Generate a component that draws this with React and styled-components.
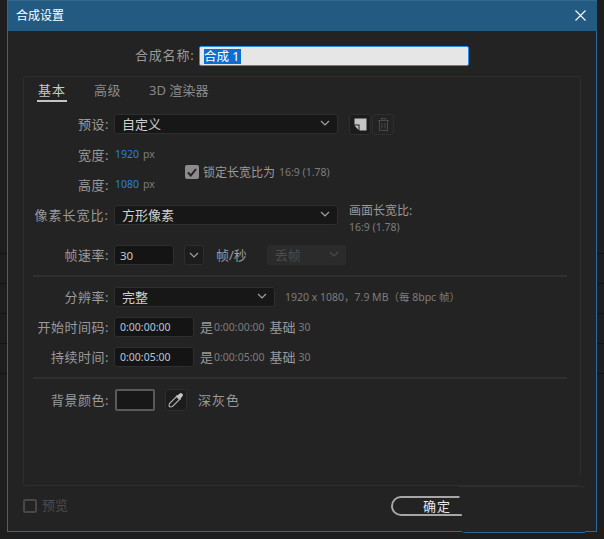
import styled, { createGlobalStyle } from "styled-components";

const GlobalStyle = createGlobalStyle`
  html, body { margin: 0; padding: 0; background: #1e1e1e; }
  * { box-sizing: border-box; }
`;

const Backdrop = styled.div`
  position: relative;
  width: 604px;
  height: 539px;
  overflow: hidden;
  padding-left: 7px;
  background: repeating-linear-gradient(to bottom, #131313 0 1px, #1e1e1e 1px 30px) 0 253px / 100% 121px no-repeat, #1e1e1e;
  font-family: "Noto Sans", "Noto Sans CJK SC", sans-serif;
  font-size: 13px;
  color: #9a9a9a;
`;

const Dialog = styled.div`
  width: 590px;
  height: 532px;
  display: flex;
  flex-direction: column;
  background: #232323;
  border: 1px solid #2a6a9a;
  border-top: 0;
`;

const TitleBar = styled.div`
  height: 31px;
  flex: none;
  display: flex;
  align-items: center;
  justify-content: space-between;
  padding: 0 11px 2px 8px;
  margin: 0 -1px 0 0;
  background: #235a82;
  border-top: 1px solid #34688c;
  color: #fff;
  font-size: 12px;
`;

const NameRow = styled.div`
  display: flex;
  align-items: center;
  height: 20px;
  margin-top: 15px;
  padding-left: 127px;
`;

const NameLabel = styled.span`
  letter-spacing: 0.8px;
  width: 64px;
  padding-bottom: 3px;
  white-space: nowrap;
`;

const NameInput = styled.div`
  width: 270px;
  height: 20px;
  display: flex;
  align-items: center;
  padding-left: 4px;
  background: #e6e6e6;
  border: 1px solid #2d8ceb;
  border-radius: 2px;
`;

const Selected = styled.span`
  background: #0a6fd0;
  color: #fff;
  font-size: 12.5px;
  line-height: 15px;
  height: 15px;
  padding-right: 2px;
`;

const Panel = styled.div`
  position: relative;
  width: 558px;
  height: 410px;
  flex: none;
  margin: 10px 0 0 15px;
  border: 1px solid #2e2e2e;
  border-radius: 3px;
  padding-left: 10px;
`;

const Tabs = styled.div`
  display: flex;
  height: 25px;
`;

const Tab = styled.div`
  height: 25px;
  margin-left: ${(p) => p.$left}px;
  padding: 4px 1px 0;
  line-height: 18px;
  letter-spacing: ${(p) => p.$spacing ?? 0.5}px;
  white-space: nowrap;
  color: ${(p) => (p.$active ? "#c8c8c8" : "#8a8a8a")};
  border-bottom: 2px solid ${(p) => (p.$active ? "#c4c4c4" : "transparent")};
`;

const Row = styled.div`
  display: flex;
  align-items: center;
  height: 20px;
  margin-top: ${(p) => p.$top}px;
`;

const Label = styled.span`
  flex: none;
  width: 75px;
  margin-right: 5px;
  padding-bottom: 2px;
  text-align: right;
  white-space: nowrap;
  letter-spacing: ${(p) => p.$spacing || 0.5}px;
`;

const Field = styled.div`
  flex: none;
  width: ${(p) => p.$width}px;
  height: 20px;
  display: flex;
  align-items: center;
  justify-content: space-between;
  padding: 0 7px 2px 7px;
  background: #171717;
  border: 1px solid #2e2e2e;
  border-radius: 3px;
  color: #cfcfcf;
`;

const TextField = styled.div`
  flex: none;
  width: ${(p) => p.$width}px;
  height: 20px;
  display: flex;
  align-items: center;
  padding-left: 5px;
  background: #141414;
  border: 1px solid #2e2e2e;
  border-radius: 3px;
  font-size: ${(p) => p.$size}px;
  color: ${(p) => p.$tint || "#c8c8c8"};
`;

const SquareButton = styled.div`
  flex: none;
  width: ${(p) => p.$width || 22}px;
  height: ${(p) => p.$height || 22}px;
  margin-left: ${(p) => p.$left || 0}px;
  display: flex;
  align-items: center;
  justify-content: center;
  border: 1px solid #2e2e2e;
  border-radius: 3px;
  background: ${(p) => (p.$dim ? "transparent" : "#1c1c1c")};
`;

const Size = styled.div`
  display: flex;
  height: 50px;
  margin-top: 11px;
`;

const SizeColumn = styled.div`
  width: 151px;
  flex: none;
  display: flex;
  flex-direction: column;
  gap: 10px;
`;

const SizeRow = styled.div`
  display: flex;
  align-items: center;
  height: 20px;
`;

const Blue = styled.span`
  color: #2e80d8;
  font-size: 10.5px;
  margin-left: 1px;
  padding-bottom: 2px;
`;

const Unit = styled.span`
  color: #7d7d7d;
  font-size: 10.5px;
  margin-left: 4px;
  padding-bottom: 2px;
`;

const Lock = styled.div`
  display: flex;
  align-items: center;
  height: 16px;
  margin-top: 19px;
  white-space: nowrap;
`;

const CheckBox = styled.div`
  flex: none;
  width: 14px;
  height: 14px;
  margin-right: ${(p) => p.$gap}px;
  display: flex;
  align-items: center;
  justify-content: center;
  border-radius: 2px;
  background: ${(p) => (p.$checked ? "#8b8b8b" : "transparent")};
  border: ${(p) => (p.$checked ? "0" : "2px solid #474747")};
`;

const Small = styled.span`
  color: #7d7d7d;
  font-size: 10.5px;
  margin-left: ${(p) => p.$left || 0}px;
  margin-right: ${(p) => p.$right || 0}px;
  padding-bottom: 1px;
  white-space: nowrap;
`;

const Plain = styled.span`
  white-space: nowrap;
  margin-left: ${(p) => p.$left || 0}px;
  padding-bottom: 2px;
  letter-spacing: ${(p) => p.$spacing || 0}px;
`;

const Caption = styled.span`
  font-size: 12px;
  white-space: nowrap;
`;

const Ratio = styled.div`
  margin-left: 11px;
  margin-top: 9px;
  line-height: 16px;
  display: flex;
  flex-direction: column;
`;

const DisabledSelect = styled.div`
  width: 79px;
  height: 20px;
  margin-left: 20px;
  display: flex;
  align-items: center;
  justify-content: space-between;
  padding: 0 7px 2px 8px;
  background: #2b2b2b;
  border-radius: 2px;
  color: #4c4c4c;
`;

const Divider = styled.div`
  width: 534px;
  height: 2px;
  margin: ${(p) => p.$top}px 0 0 -1px;
  background: #2f2f2f;
`;

const Swatch = styled.div`
  width: 40px;
  height: 22px;
  margin-left: 1px;
  flex: none;
  background: #181818;
  border: 2px solid #5a5a5a;
  border-radius: 2px;
`;

const Footer = styled.div`
  display: flex;
  align-items: center;
  justify-content: space-between;
  height: 20px;
  margin-top: 10px;
  padding: 0 113px 0 15px;
`;

const Preview = styled.div`
  display: flex;
  align-items: center;
  color: #4c4c4c;
  line-height: 16px;
`;

const OkButton = styled.div`
  width: 92px;
  height: 20px;
  display: flex;
  align-items: center;
  justify-content: center;
  padding-bottom: 2px;
  border: 2px solid #a6a6a6;
  border-radius: 10px;
  color: #e8e8e8;
  letter-spacing: 1px;
`;

/* leftover piece of another window sitting over the dialog corner */
const CornerPatch = styled.div`
  position: absolute;
  left: 458px;
  top: 486px;
  width: 127px;
  height: 47px;
  background: #232323;
  border-top: 1px solid #2e2e2e;
  border-bottom: 1px solid #2a6a9a;
  clip-path: polygon(0 0, 100% 0, 100% 100%, 7px 100%, 4px 46px, 4px 30px);
`;

const PanelEdgeCover = styled.div`
  position: absolute;
  right: -2px;
  bottom: -1px;
  width: 4px;
  height: 11px;
  background: #232323;
`;

const Chevron = ({ color = "#a0a0a0" }) => (
  <svg width="10" height="6" viewBox="0 0 10 6" fill="none" stroke={color} strokeWidth="1.2">
    <path d="M1 1l4 4 4-4" />
  </svg>
);

const App = () => (
  <Backdrop>
    <GlobalStyle />
    <Dialog>
      <TitleBar>
        合成设置
        <svg width="11" height="11" viewBox="0 0 11 11" stroke="#fff" strokeWidth="1.1">
          <path d="M0.5 0.5l10 10M10.5 0.5l-10 10" />
        </svg>
      </TitleBar>
      <NameRow>
        <NameLabel>合成名称:</NameLabel>
        <NameInput>
          <Selected>合成 1</Selected>
        </NameInput>
      </NameRow>
      <Panel>
        <Tabs>
          <Tab $active $left={3} $spacing={1}>基本</Tab>
          <Tab $left={26}>高级</Tab>
          <Tab $left={26} $spacing={0.01}>3D 渲染器</Tab>
        </Tabs>
        <Row $top={12}>
          <Label>预设:</Label>
          <Field $width={224}>
            自定义
            <Chevron />
          </Field>
          <SquareButton $left={11} $height={21}>
            <svg width="13" height="13" viewBox="0 0 13 13">
              <path d="M0.5 0.5H12.5V12.5H5.5V6.5H0.5Z" fill="#c4c4c4" />
              <path d="M0.5 7.5H4.5V12Z" fill="#c4c4c4" />
            </svg>
          </SquareButton>
          <SquareButton $left={1} $height={21} $dim>
            <svg width="11" height="13" viewBox="0 0 11 13" fill="none" stroke="#4a4a4a" strokeWidth="1">
              <path d="M0 2.5H11M3.5 2.5V.5H7.5V2.5M1.5 2.5V12.5H9.5V2.5M4 5V10.5M7 5V10.5" />
            </svg>
          </SquareButton>
        </Row>
        <Size>
          <SizeColumn>
            <SizeRow>
              <Label>宽度:</Label>
              <Blue>1920</Blue>
              <Unit>px</Unit>
            </SizeRow>
            <SizeRow>
              <Label>高度:</Label>
              <Blue>1080</Blue>
              <Unit>px</Unit>
            </SizeRow>
          </SizeColumn>
          <Lock>
            <CheckBox $checked $gap={4}>
              <svg width="10" height="9" viewBox="0 0 10 9" fill="none" stroke="#232323" strokeWidth="2">
                <path d="M1 4.5L3.8 7.5L9 1" />
              </svg>
            </CheckBox>
            <Caption>锁定长宽比为</Caption>
            <Small $left={4}>16:9 (1.78)</Small>
          </Lock>
        </Size>
        <Row $top={10}>
          <Label $spacing={1}>像素长宽比:</Label>
          <Field $width={224}>
            方形像素
            <Chevron />
          </Field>
          <Ratio>
            <Caption>画面长宽比:</Caption>
            <Small>16:9 (1.78)</Small>
          </Ratio>
        </Row>
        <Row $top={20}>
          <Label>帧速率:</Label>
          <TextField $width={60} $size={11.5}>30</TextField>
          <SquareButton $left={10} $width={20} $height={20}>
            <Chevron />
          </SquareButton>
          <Plain $left={12}>帧/秒</Plain>
          <DisabledSelect>
            丢帧
            <Chevron color="#4a4a4a" />
          </DisabledSelect>
        </Row>
        <Divider $top={10} />
        <Row $top={10}>
          <Label>分辨率:</Label>
          <Field $width={161}>
            完整
            <Chevron />
          </Field>
          <Small $left={10}>1920 x 1080，7.9 MB（每 8bpc 帧）</Small>
        </Row>
        <Row $top={10}>
          <Label>开始时间码:</Label>
          <TextField $width={80} $size={10.5} $tint="#b4c8dc">0:00:00:00</TextField>
          <Plain $left={6}>是</Plain>
          <Small $left={1} $right={5}>0:00:00:00</Small>
          <Plain>基础</Plain>
          <Small $left={3}>30</Small>
        </Row>
        <Row $top={10}>
          <Label>持续时间:</Label>
          <TextField $width={80} $size={10.5} $tint="#b4c8dc">0:00:05:00</TextField>
          <Plain $left={6}>是</Plain>
          <Small $left={1} $right={5}>0:00:05:00</Small>
          <Plain>基础</Plain>
          <Small $left={3}>30</Small>
        </Row>
        <Divider $top={10} />
        <Row $top={11}>
          <Label>背景颜色:</Label>
          <Swatch />
          <SquareButton $left={10}>
            <svg width="16" height="16" viewBox="0 0 16 16">
              <path d="M8.5 4.5L11.5 7.5L4.5 14.5L2 15L1 14L1.5 11.5Z" fill="none" stroke="#b4b4b4" strokeWidth="1.1" />
              <path d="M8 3.5L12.5 8L13 6L15 3.5C15.5 2.5 13.5 .5 12.5 1L10 3Z" fill="#c4c4c4" />
            </svg>
          </SquareButton>
          <Plain $left={11} $spacing={1}>深灰色</Plain>
        </Row>
        <PanelEdgeCover />
      </Panel>
      <Footer>
        <Preview>
          <CheckBox $gap={5} />
          <Plain>预览</Plain>
        </Preview>
        <OkButton>确定</OkButton>
      </Footer>
    </Dialog>
    <CornerPatch />
  </Backdrop>
);

export default App;
